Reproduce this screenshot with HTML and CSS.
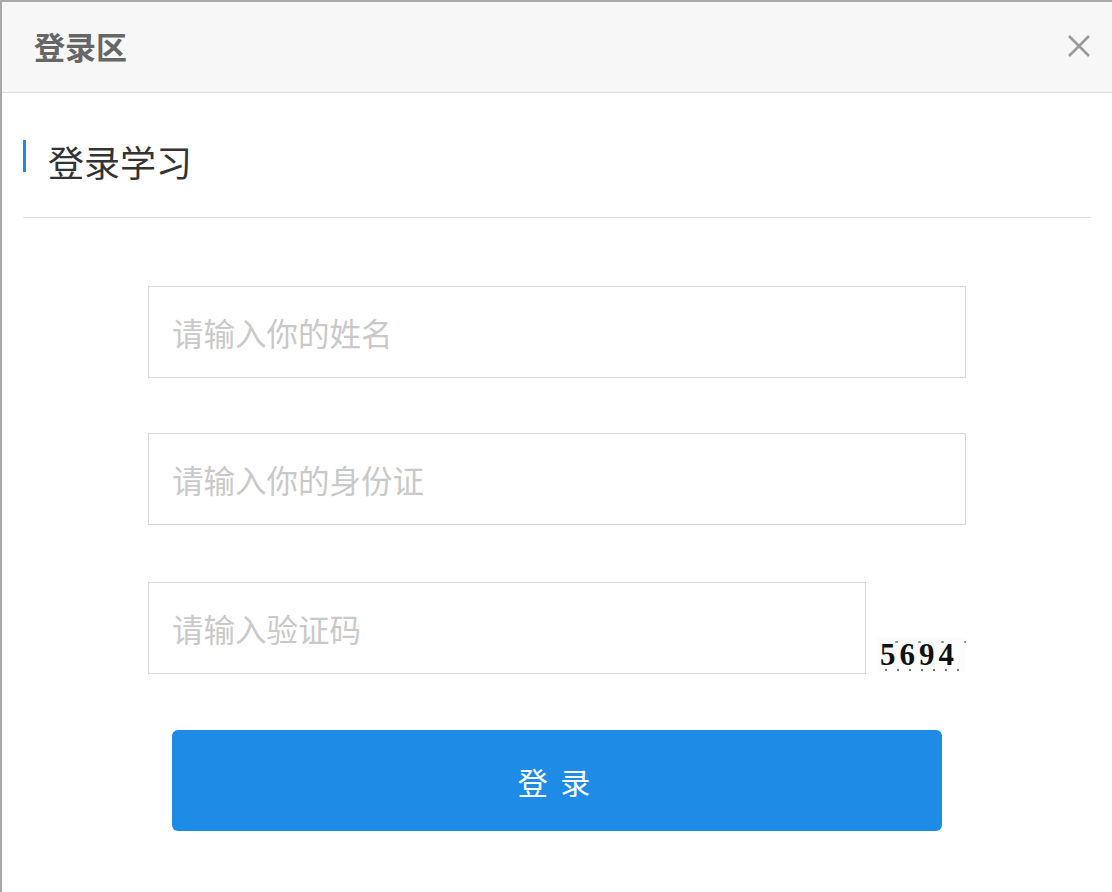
FILE: index.html
```html
<!DOCTYPE html>
<html lang="zh">
<head>
<meta charset="utf-8">
<title>登录区</title>
<link rel="stylesheet" href="styles.css">
</head>
<body>
<div class="dialog">
  <div class="dialog-header">
    <span class="dialog-title">登录区</span>
    <span class="dialog-close" aria-label="关闭">
      <svg width="24" height="24" viewBox="0 0 24 24"><path d="M2 2 L22 22 M22 2 L2 22" stroke="#9a9a9a" stroke-width="2.6" fill="none"/></svg>
    </span>
  </div>
  <div class="dialog-body">
    <div class="section-head">
      <span class="section-bar"></span>
      <span class="section-title">登录学习</span>
    </div>
    <form class="login-form">
      <input class="field" type="text" placeholder="请输入你的姓名">
      <input class="field field-second" type="text" placeholder="请输入你的身份证">
      <div class="captcha-row">
        <input class="field field-short" type="text" placeholder="请输入验证码">
        <span class="captcha">5694</span>
      </div>
      <button class="submit" type="button">登 录</button>
    </form>
  </div>
</div>
</body>
</html>
```

FILE: styles.css
```css
* { box-sizing: border-box; }
html, body { margin: 0; padding: 0; background: #fff; }
body { font-family: "Noto Sans CJK SC", "Noto Sans", sans-serif; }

.dialog {
  width: 1112px;
  height: 892px;
  border-top: 2px solid #a9a9a9;
  border-left: 2px solid #a9a9a9;
  background: #fff;
}

.dialog-header {
  height: 91px;
  background: #f7f7f7;
  border-bottom: 1px solid #dcdcdc;
  display: flex;
  align-items: center;
  justify-content: space-between;
  padding: 0 21px 0 32px;
}
.dialog-title {
  font-size: 31px;
  font-weight: bold;
  color: #666;
  line-height: 40px;
  margin-top: -2px;
}
.dialog-close {
  display: flex;
  width: 24px;
  height: 24px;
  margin-top: -3px;
}

.dialog-body { padding: 0 21px; }

.section-head {
  height: 125px;
  padding-top: 45px;
  border-bottom: 1px solid #dadada;
  display: flex;
  align-items: flex-start;
}
.section-bar {
  width: 3px;
  height: 32px;
  margin-top: 2px;
  background: #1e8ce6;
}
.section-title {
  font-size: 36px;
  line-height: 40px;
  color: #333;
  margin-left: 22px;
  margin-top: 3px;
}

.login-form {
  width: 818px;
  margin: 68px 0 0 125px;
  display: flex;
  flex-direction: column;
  align-items: center;
}
.field {
  width: 818px;
  height: 92px;
  border: 1px solid #d8d8d8;
  padding: 0 0 0 23px;
  font-family: "Noto Sans CJK SC", "Noto Sans", sans-serif;
  font-size: 31.5px;
  color: #333;
  outline: none;
  margin-bottom: 55px;
  background: #fff;
}
.field::placeholder { color: #c9c9c9; }
.field-second { margin-bottom: 57px; }

.captcha-row {
  width: 818px;
  display: flex;
  align-items: flex-end;
  margin-bottom: 56px;
}
.captcha-row .field { margin-bottom: 0; }
.field-short { width: 718px; }
.captcha {
  margin-left: 11px;
  margin-bottom: 2px;
  width: 89px;
  height: 34px;
  font-family: "Liberation Serif", "DejaVu Serif", serif;
  font-weight: bold;
  font-size: 31px;
  line-height: 34px;
  letter-spacing: 4px;
  padding-left: 3px;
  color: #111;
  white-space: nowrap;
  background:
    radial-gradient(circle, #777 1px, transparent 1.5px) 3px 27px / 12px 10px repeat-x,
    radial-gradient(circle, #888 1px, transparent 1.5px) 8px 0 / 23px 8px repeat-x,
    #fcfcfc;
}

.submit {
  width: 770px;
  height: 101px;
  border: none;
  border-radius: 6px;
  background: #1e8ce6;
  color: #fff;
  font-family: "Noto Sans CJK SC", "Noto Sans", sans-serif;
  font-size: 30px;
  letter-spacing: 3px;
  padding-left: 3px;
  cursor: pointer;
}
```
